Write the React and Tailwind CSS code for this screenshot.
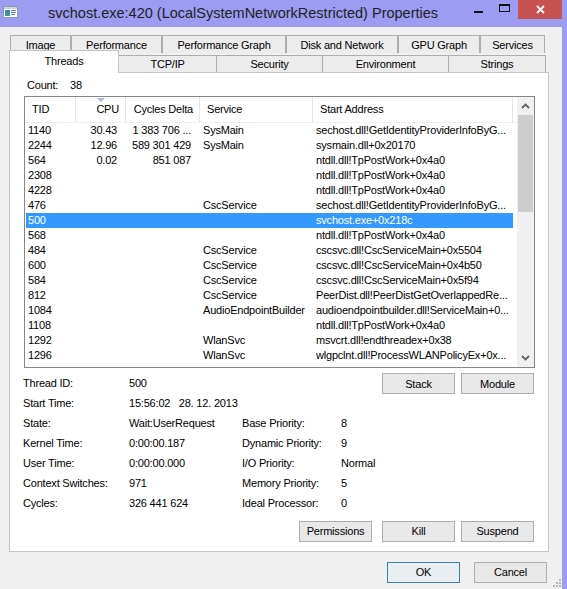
import React from "react";

const rows = [
  ["1140", "30.43", "1 383 706 ...", "SysMain", "sechost.dll!GetIdentityProviderInfoByG..."],
  ["2244", "12.96", "589 301 429", "SysMain", "sysmain.dll+0x20170"],
  ["564", "0.02", "851 087", "", "ntdll.dll!TpPostWork+0x4a0"],
  ["2308", "", "", "", "ntdll.dll!TpPostWork+0x4a0"],
  ["4228", "", "", "", "ntdll.dll!TpPostWork+0x4a0"],
  ["476", "", "", "CscService", "sechost.dll!GetIdentityProviderInfoByG..."],
  ["500", "", "", "", "svchost.exe+0x218c"],
  ["568", "", "", "", "ntdll.dll!TpPostWork+0x4a0"],
  ["484", "", "", "CscService", "cscsvc.dll!CscServiceMain+0x5504"],
  ["600", "", "", "CscService", "cscsvc.dll!CscServiceMain+0x4b50"],
  ["584", "", "", "CscService", "cscsvc.dll!CscServiceMain+0x5f94"],
  ["812", "", "", "CscService", "PeerDist.dll!PeerDistGetOverlappedRe..."],
  ["1084", "", "", "AudioEndpointBuilder", "audioendpointbuilder.dll!ServiceMain+0..."],
  ["1108", "", "", "", "ntdll.dll!TpPostWork+0x4a0"],
  ["1292", "", "", "WlanSvc", "msvcrt.dll!endthreadex+0x38"],
  ["1296", "", "", "WlanSvc", "wlgpclnt.dll!ProcessWLANPolicyEx+0x..."],
];

const topTabs = [
  ["Image", "w-[61px]"],
  ["Performance", "w-[91px]"],
  ["Performance Graph", "w-[124px]"],
  ["Disk and Network", "w-[112px]"],
  ["GPU Graph", "w-[82px]"],
  ["Services", "w-[65px]"],
];

const bottomTabs = [
  ["TCP/IP", "w-[98px]"],
  ["Security", "w-[106px]"],
  ["Environment", "w-[126px]"],
  ["Strings", "w-[97px]"],
];

function Button({ children, primary }) {
  return (
    <div
      className={
        "w-[73px] h-[21px] flex items-center justify-center border text-[11px] text-black " +
        (primary ? "border-[#3c7fb1] bg-[#e9eef3]" : "border-[#adadad] bg-[#e8e8e8]")
      }>
      {children}
    </div>
  );
}

function TitleBar() {
  return (
    <div className="h-[27px] bg-[#9b9cf2] flex items-start">
      <svg width="15" height="12" viewBox="0 0 15 12" className="mt-[6px] ml-[3px]">
        <rect x="0.5" y="0.5" width="14" height="11" fill="#ffffff" stroke="#8a9bb0" />
        <rect x="1" y="1" width="13" height="2" fill="#c8d4e4" />
        <rect x="2" y="4" width="5" height="6" fill="#3d9a8a" />
        <rect x="2" y="4" width="5" height="3" fill="#4a7fc0" />
        <rect x="8" y="4" width="5" height="1" fill="#5a7fb5" />
        <rect x="8" y="6" width="5" height="1" fill="#5a7fb5" />
        <rect x="8" y="8" width="4" height="1" fill="#5a7fb5" />
      </svg>
      <div className="ml-[30px] mt-[3px] text-[14.5px] leading-[20px] text-[#222]">
        svchost.exe:420 (LocalSystemNetworkRestricted) Properties
      </div>
      <div className="ml-auto flex items-start">
        <div className="w-[9px] h-[2px] bg-[#111] mt-[11px] mr-[16px]" />
        <div className="w-[11px] h-[8px] border border-t-2 border-[#111] mt-[4px] mr-[8px]" />
        <div className="w-[44px] h-[19px] bg-[#c75050] flex items-center justify-center">
          <svg width="9" height="9" viewBox="0 0 9 9">
            <path d="M1 1 L8 8 M8 1 L1 8" stroke="#ffffff" strokeWidth="1.8" />
          </svg>
        </div>
        <div className="w-[5px]" />
      </div>
    </div>
  );
}

function ListView() {
  return (
    <div className="ml-[14px] mt-[3px] w-[511px] h-[272px] border border-[#828790] flex bg-white">
      <div className="flex-1 flex flex-col">
        <div className="h-[26px] flex border-b border-[#efefef] text-[11px] text-black">
          <div className="w-[51px] border-r border-[#e5e5e5] pl-[7px] leading-[25px]">TID</div>
          <div className="w-[50px] border-r border-[#e5e5e5] pr-[6px] text-right leading-[25px] relative">
            <svg width="8" height="4" viewBox="0 0 8 4" className="absolute left-[21px] top-[1px]">
              <path d="M0 0 L8 0 L4 4 Z" fill="#a5b8d6" />
            </svg>
            CPU
          </div>
          <div className="w-[74px] border-r border-[#e5e5e5] pr-[6px] text-right leading-[25px]">Cycles Delta</div>
          <div className="w-[113px] border-r border-[#e5e5e5] pl-[7px] leading-[25px]">Service</div>
          <div className="w-[200px] border-r border-[#e5e5e5] pl-[7px] leading-[25px]">Start Address</div>
        </div>
        {rows.map((r) => {
          const sel = r[0] === "500";
          return (
            <div
              key={r[0]}
              className={
                "h-[15px] flex ml-px w-[487px] text-[11px] leading-[15px] whitespace-nowrap " +
                (sel ? "bg-[#3399ff] text-white" : "text-black")
              }>
              <div className="w-[50px] pl-[2px] overflow-hidden">{r[0]}</div>
              <div className="w-[50px] pr-[9px] text-right overflow-hidden">{r[1]}</div>
              <div className="w-[74px] pr-[9px] text-right overflow-hidden">{r[2]}</div>
              <div className="w-[113px] pl-[3px] overflow-hidden">{r[3]}</div>
              <div className="w-[200px] pl-[3px] overflow-hidden">{r[4]}</div>
            </div>
          );
        })}
      </div>
      <div className="w-[17px] flex flex-col bg-[#f0f0f0]">
        <div className="h-[18px] flex items-center justify-center">
          <svg width="9" height="6" viewBox="0 0 9 6">
            <path d="M1 5 L4.5 1.5 L8 5" stroke="#606060" strokeWidth="1.8" fill="none" />
          </svg>
        </div>
        <div className="h-[97px] mx-px bg-[#cdcdcd]" />
        <div className="flex-1" />
        <div className="h-[18px] flex items-center justify-center">
          <svg width="9" height="6" viewBox="0 0 9 6">
            <path d="M1 1 L4.5 4.5 L8 1" stroke="#606060" strokeWidth="1.8" fill="none" />
          </svg>
        </div>
      </div>
    </div>
  );
}

function Detail({ label, value, label2, value2, children }) {
  return (
    <div className="h-[20px] flex items-start text-[11px] leading-[20px] text-black pl-[13px]">
      <div className="w-[106px]">{label}</div>
      <div className="w-[113px] whitespace-pre">{value}</div>
      {label2 && <div className="w-[99px]">{label2}</div>}
      {value2 && <div>{value2}</div>}
      {children}
    </div>
  );
}

export default function App() {
  return (
    <div className="w-[567px] h-[589px] bg-[#f0f0f0] flex flex-col overflow-hidden font-['Liberation_Sans',Arial,sans-serif]">
      <TitleBar />
      <div className="flex flex-1 tracking-[-0.2px]">
        <div className="w-[562px] flex flex-col relative">
          {/* tab headers */}
          <div className="mt-[8px] h-[18px] flex pl-[10px] text-[11px] text-black">
            {topTabs.map(([t, w]) => (
              <div key={t} className={w + " h-[18px] border border-b-0 border-[#adadad] bg-[#ececec] flex items-center justify-center pt-px"}>
                {t}
              </div>
            ))}
          </div>
          <div className="h-[19px] flex items-end pl-[9px] text-[11px] text-black">
            <div className="w-[110px] h-[23px] -mb-px relative z-10 border border-b-0 border-[#c5c5c5] bg-white flex justify-center pt-[3px] leading-[15px]">
              Threads
            </div>
            {bottomTabs.map(([t, w]) => (
              <div key={t} className={w + " h-[17px] border border-l-0 border-b-0 border-[#adadad] bg-[#ececec] flex items-center justify-center"}>
                {t}
              </div>
            ))}
          </div>

          {/* panel */}
          <div className="ml-[9px] w-[540px] h-[480px] border border-[#c5c5c5] bg-white flex flex-col">
            <div className="pt-[5px] h-[20px] flex text-[11px] leading-[15px] text-black pl-[17px]">
              <div className="w-[43px]">Count:</div>
              <div>38</div>
            </div>
            <ListView />
            <div className="mt-[5px] flex flex-col">
              <Detail label="Thread ID:" value="500">
                <div className="ml-auto flex gap-[6px] pr-[14px]">
                  <Button>Stack</Button>
                  <Button>Module</Button>
                </div>
              </Detail>
              <Detail label="Start Time:" value={"15:56:02   28. 12. 2013"} />
              <Detail label="State:" value="Wait:UserRequest" label2="Base Priority:" value2="8" />
              <Detail label="Kernel Time:" value="0:00:00.187" label2="Dynamic Priority:" value2="9" />
              <Detail label="User Time:" value="0:00:00.000" label2="I/O Priority:" value2="Normal" />
              <Detail label="Context Switches:" value="971" label2="Memory Priority:" value2="5" />
              <Detail label="Cycles:" value="326 441 624" label2="Ideal Processor:" value2="0" />
            </div>
            <div className="mt-[8px] flex justify-end pr-[14px]">
              <Button>Permissions</Button>
              <div className="w-[10px]" />
              <Button>Kill</Button>
              <div className="w-[6px]" />
              <Button>Suspend</Button>
            </div>
          </div>

          <div className="mt-[10px] flex justify-end gap-[14px] pr-[15px]">
            <Button primary>OK</Button>
            <Button>Cancel</Button>
          </div>
          <svg width="8" height="8" viewBox="0 0 8 8" className="absolute right-[1px] bottom-[2px]">
            <rect x="6" y="0" width="2" height="2" fill="#b8b8b8" />
            <rect x="3" y="3" width="2" height="2" fill="#b8b8b8" />
            <rect x="6" y="3" width="2" height="2" fill="#b8b8b8" />
            <rect x="0" y="6" width="2" height="2" fill="#b8b8b8" />
            <rect x="3" y="6" width="2" height="2" fill="#b8b8b8" />
            <rect x="6" y="6" width="2" height="2" fill="#b8b8b8" />
          </svg>
        </div>
        <div className="flex-1 bg-[#9b9cf2]" />
      </div>
    </div>
  );
}
